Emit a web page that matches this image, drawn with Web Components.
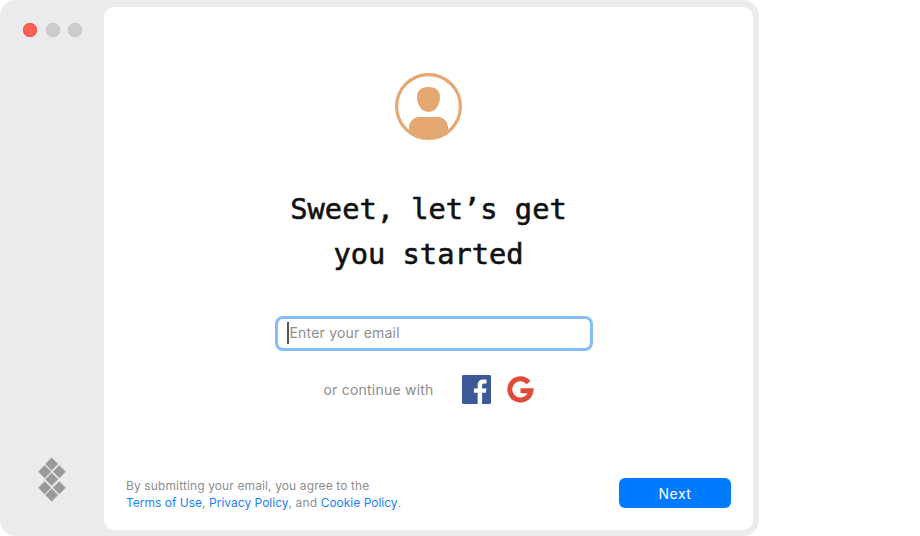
<!DOCTYPE html>
<html>
<head>
<meta charset="utf-8">
<title>Sign up</title>
<style>
html, body { margin: 0; height: 100%; background: #fff; }
body { font-family: Inter, "Noto Sans", sans-serif; }
</style>
</head>
<body>
<app-window>
    <traffic-lights slot="top"></traffic-lights>
    <brand-mark slot="bottom"></brand-mark>
    <user-avatar></user-avatar>
    <page-title>Sweet, let’s get<br>you started</page-title>
    <email-field>Enter your email</email-field>
    <social-row>or continue with</social-row>
    <form-footer>
        By submitting your email, you agree to the<br>
        <a href="#">Terms of Use</a>, <a href="#">Privacy Policy</a>, and <a href="#">Cookie Policy</a>.
    </form-footer>
</app-window>
<script>
function define(name, html) {
    const template = document.createElement('template');
    template.innerHTML = html;
    class Element extends HTMLElement {
        constructor() {
            super();
            this.attachShadow({mode: 'open'})
                .appendChild(template.content.cloneNode(true));
        }
    }
    if (!customElements.get(name)) {
        customElements.define(name, Element);
    }
}

define('app-window', `
<style>
:host { display: flex; width: 759px; height: 536px; box-sizing: border-box; background: #ebebeb; border-radius: 16px; }
.side { width: 104px; flex: none; display: flex; flex-direction: column; justify-content: space-between; padding: 23px 0 34px; box-sizing: border-box; }
.card { flex: 1; margin: 7px 6px 6px 0; background: #fff; border-radius: 10px; display: flex; flex-direction: column; align-items: center; padding-top: 66px; box-sizing: border-box; }
</style>
<div class="side"><slot name="top"></slot><slot name="bottom"></slot></div>
<div class="card"><slot></slot></div>
`);

define('traffic-lights', `
<style>
:host { display: flex; gap: 8.5px; padding-left: 23px; }
i { width: 14px; height: 14px; border-radius: 50%; background: #cdcdcd; box-shadow: inset 0 0 0 1px #c6c6c6; }
i:first-of-type { background: #ff5f57; box-shadow: inset 0 0 0 1px #f2534b; }
</style>
<i></i><i></i><i></i>
`);

define('brand-mark', `
<style>
:host { display: block; padding-left: 38px; height: 45px; }
svg { display: block; }
</style>
<svg width="29" height="45" viewBox="0 0 29 45" fill="#9a9a9a" stroke="#ebebeb" stroke-width=".5">
    <path d="M13.700 .3l6.700 6.700-6.700 6.700-6.700-6.700z"/>
    <path d="M6.700 8l6.700 6.700-6.700 6.700L0 14.700z"/>
    <path d="M21.300 8l6.700 6.700-6.700 6.700-6.700-6.700z"/>
    <path d="M13.700 15.600l6.700 6.700-6.700 6.700-6.700-6.700z"/>
    <path d="M6.700 24l6.700 6.700-6.700 6.700L0 30.700z"/>
    <path d="M21.300 24l6.700 6.700-6.700 6.700-6.700-6.700z"/>
    <path d="M13.700 31.300l6.700 6.700-6.700 6.700L7 38z"/>
</svg>
`);

define('user-avatar', `
<style>
:host { display: block; width: 67px; height: 67px; }
svg { display: block; }
</style>
<svg width="67" height="67" viewBox="0 0 67 67">
    <defs><clipPath id="c"><circle cx="33.5" cy="33.5" r="31"/></clipPath></defs>
    <circle cx="33.5" cy="33.5" r="31.900" fill="#fff" stroke="#e5a873" stroke-width="3.200"/>
    <path fill="#e5a873" d="M33.500 14c7.500 0 11.500 3.800 11.500 10 0 3.200-.8 6.500-2.400 9.300-2.100 3.800-5.300 5.700-9.100 5.700s-7-1.900-9.100-5.700c-1.600-2.800-2.400-6.100-2.400-9.300 0-6.200 4-10 11.500-10z"/>
    <rect clip-path="url(#c)" x="14" y="44" width="39" height="30" rx="10" fill="#e5a873"/>
</svg>
`);

define('page-title', `
<style>
:host { display: block; margin-top: 47px; font: 400 28.7px/45px "DejaVu Sans Mono", "Liberation Mono", monospace; -webkit-text-stroke: .6px #111; color: #111; text-align: center; }
</style>
<slot></slot>
`);

define('email-field', `
<style>
:host { display: block; margin: 39px 0 0 10px; width: 318px; height: 35px; box-sizing: border-box; border: 3px solid #84bdfb; border-radius: 8px; background: #fff; }
.inner { display: flex; align-items: center; height: 100%; padding: 0 0 2px 9px; box-sizing: border-box; font-size: 14px; letter-spacing: .2px; color: #8e8e8e; }
.caret { width: 2px; height: 22px; background: #555; margin-right: 1px; }
</style>
<div class="inner"><span class="caret"></span><slot></slot></div>
`);

define('social-row', `
<style>
:host { display: flex; align-items: center; margin-top: 22px; height: 32px; font-size: 14px; letter-spacing: .22px; color: #8e8e8e; }
.fb { margin-left: 28px; display: block; }
.g { margin-left: 16px; display: block; }
</style>
<slot></slot>
<svg class="fb" width="29" height="29" viewBox="0 0 30 30">
    <rect width="30" height="30" rx="1.500" fill="#3b5998"/>
    <path fill="#fff" d="M20.800 30V18.400h3.900l.6-4.500h-4.500V11c0-1.300.4-2.200 2.200-2.200h2.400v-4c-.4-.1-1.800-.2-3.400-.2-3.400 0-5.800 2.100-5.800 5.900v3.400h-3.900v4.500h3.900V30z"/>
</svg>
<svg class="g" width="27" height="27" viewBox="0 0 28 28">
    <path fill="none" stroke="#de4b39" stroke-width="5.200" d="M22.300 6.800A11 11 0 1 0 24.800 15.400H14"/>
</svg>
`);

define('form-footer', `
<style>
:host { display: flex; align-self: stretch; justify-content: space-between; align-items: flex-end; margin-top: auto; padding: 0 22px 19px; font-size: 12px; letter-spacing: .12px; line-height: 17px; color: #8e8e8e; }
::slotted(a) { color: #1a82f7; text-decoration: none; letter-spacing: 0; }
.text { padding-top: 2px; }
button { width: 112px; height: 30px; margin-bottom: 3px; border: 0; border-radius: 6px; background: #007aff; color: #fff; font: 400 14px Inter, sans-serif; letter-spacing: .5px; }
</style>
<div class="text"><slot></slot></div>
<button>Next</button>
`);
</script>
</body>
</html>
